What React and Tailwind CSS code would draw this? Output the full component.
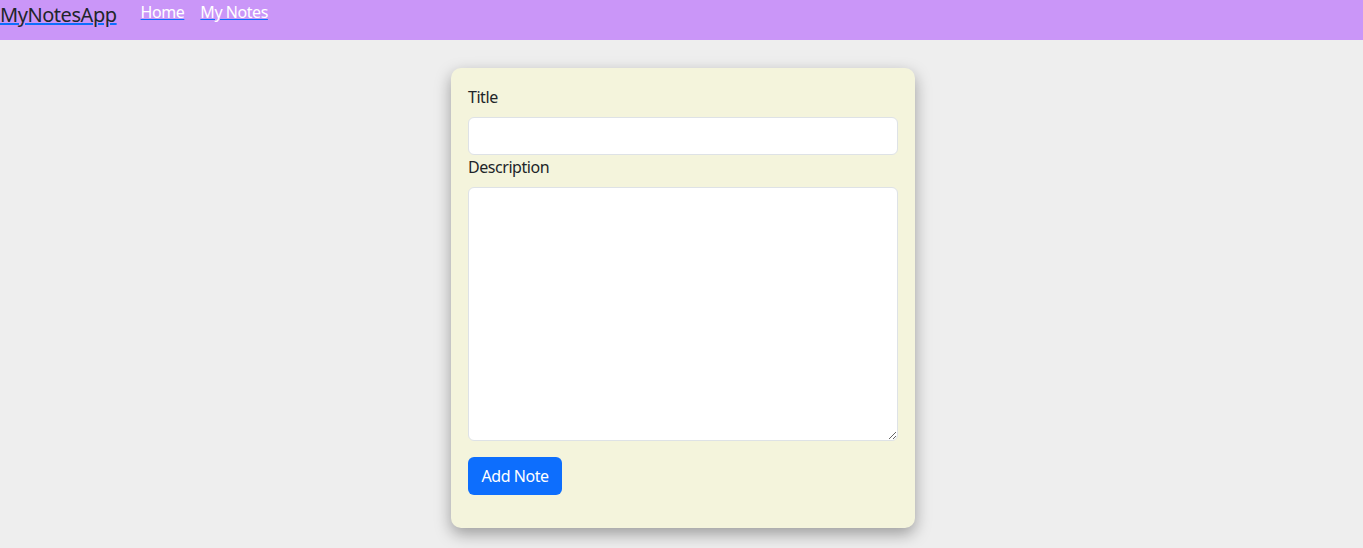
export default function App() {
  return (
    <div className="min-h-[548px] bg-[#eeeeee] tracking-[-0.45px] text-[#212529]" style={{ fontFamily: '"Segoe UI", "Noto Sans", sans-serif' }}>
      <nav className="flex h-10 items-start bg-[#ca96f8]">
        <a href="#" className="mr-4 text-[20px] leading-[30px] text-[#212529] underline decoration-[#0d6efd]">MyNotesApp</a>
        <a href="#" className="px-2 text-[16px] leading-6 text-white underline decoration-[#0d6efd]">Home</a>
        <a href="#" className="px-2 text-[16px] leading-6 text-white underline decoration-[#0d6efd]">My Notes</a>
      </nav>
      <div className="pl-[3px]">
        <div className="mx-auto mt-[28px] w-[464px] rounded-[10px] bg-[#f4f4dc] px-[17px] pt-[17px] pb-[33px] shadow-[0_6px_16px_rgba(0,0,0,0.35)]">
          <label className="mb-2 block text-[16px] leading-6">Title</label>
          <input type="text" className="block h-[38px] w-full rounded-[6px] border border-[#dee2e6] bg-white px-3" />
          <label className="mb-2 block text-[16px] leading-6">Description</label>
          <textarea className="block h-[254px] w-full rounded-[6px] border border-[#dee2e6] bg-white px-3" />
          <button className="mt-4 h-[38px] rounded-[6px] bg-[#0d6efd] px-[13.5px] text-[16px] text-white">Add Note</button>
        </div>
      </div>
    </div>
  );
}
